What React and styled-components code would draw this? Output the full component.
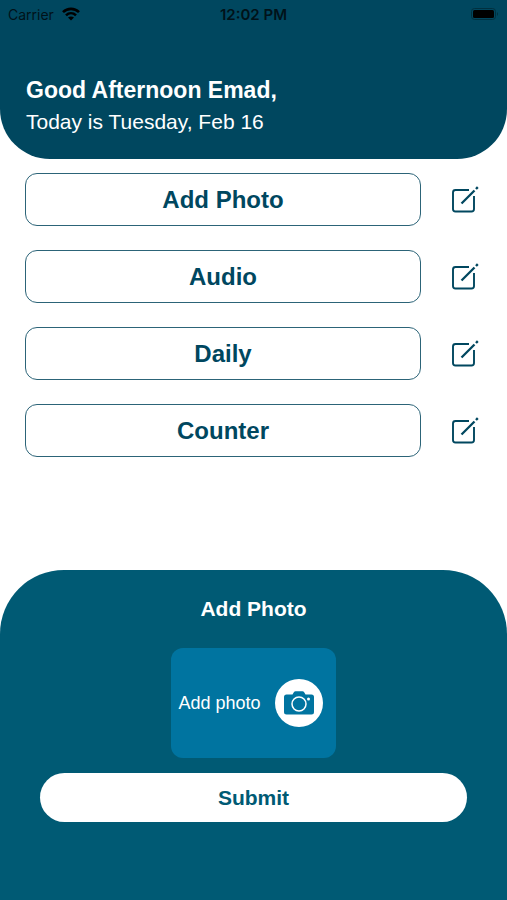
import React from 'react'
import styled, { createGlobalStyle } from 'styled-components'

const trackers = ['Add Photo', 'Audio', 'Daily', 'Counter']

const GlobalStyle = createGlobalStyle`
  * {
    box-sizing: border-box;
  }

  body {
    margin: 0;
    background: #fff;
    font-family: "Liberation Sans", Arial, sans-serif;
  }

  button {
    font-family: inherit;
    cursor: pointer;
  }
`

const Screen = styled.div`
  display: flex;
  flex-direction: column;
  min-height: 100vh;
`

const Header = styled.header`
  padding-bottom: 20px;
  border-radius: 0 0 50px 50px;
  background: #00475f;
  color: #fff;
`

const StatusBar = styled.div`
  display: grid;
  grid-template-columns: 1fr auto 1fr;
  align-items: center;
  height: 28px;
  padding: 0 8px;
  color: #001219;
  font-family: Inter, "Liberation Sans", sans-serif;
  font-size: 14px;
`

const Carrier = styled.span`
  display: flex;
  align-items: center;
  gap: 8px;
`

const Clock = styled.span`
  font-size: 15px;
  font-weight: 600;
`

const BatteryIcon = styled.svg`
  justify-self: end;
`

const Greeting = styled.div`
  padding: 47px 26px 0;
`

const Hello = styled.h1`
  margin: 0;
  font-size: 23px;
  line-height: 30px;
`

const Today = styled.p`
  margin: 0;
  font-size: 21px;
  line-height: 34px;
`

const TrackerList = styled.ul`
  display: flex;
  flex-direction: column;
  gap: 24px;
  margin: 0;
  padding: 14px 25px 24px;
  list-style: none;
`

const TrackerRow = styled.li`
  display: flex;
  align-items: center;
  gap: 25px;
`

const TrackerButton = styled.button`
  flex: 1;
  height: 53px;
  padding: 0;
  border: 1px solid #2c6478;
  border-radius: 12px;
  background: #fff;
  color: #00475f;
  font-size: 24px;
  font-weight: bold;
`

const EditButton = styled.button`
  display: flex;
  padding: 2px;
  border: 0;
  background: none;
  color: #00475f;
`

const Panel = styled.section`
  display: flex;
  flex-direction: column;
  align-items: center;
  margin-top: auto;
  padding: 24px 40px 78px;
  border-radius: 64px 64px 0 0;
  background: #005a74;
  color: #fff;
`

const PanelTitle = styled.h2`
  margin: 0 0 24px;
  font-size: 21px;
  line-height: 30px;
`

const PhotoButton = styled.button`
  display: flex;
  align-items: center;
  gap: 14px;
  height: 110px;
  padding: 0 13px 0 7px;
  border: 0;
  border-radius: 12px;
  background: #0074a0;
  color: #fff;
  font-size: 18px;
`

const CameraBadge = styled.span`
  display: flex;
  align-items: center;
  justify-content: center;
  width: 48px;
  height: 48px;
  border-radius: 50%;
  background: #fff;
`

const SubmitButton = styled.button`
  width: 100%;
  height: 49px;
  margin-top: 15px;
  border: 0;
  border-radius: 25px;
  background: #fff;
  color: #005a74;
  font-size: 21px;
  font-weight: bold;
`

const WifiIcon = () => (
  <svg width="18" height="14" viewBox="0 0 18 14" fill="none" stroke="#000" strokeWidth="2.6" aria-hidden="true">
    <path d="M1 5.2C5.5 .7 12.500 .7 17 5.200" />
    <path d="M4 8.400C6.900 5.600 11.100 5.600 14 8.400" />
    <path d="M6 10.600C7.700 9 10.300 9 12 10.600L9 13.600Z" fill="#000" stroke="none" />
  </svg>
)

const Battery = () => (
  <BatteryIcon width="28" height="12" viewBox="0 0 28 12" aria-hidden="true">
    <rect x=".5" y=".5" width="24" height="11" rx="3" fill="none" stroke="#00303f" />
    <rect x="2" y="2" width="21" height="8" rx="1.500" fill="#000" />
    <path d="M26 4Q28 6 26 8Z" fill="#00303f" />
  </BatteryIcon>
)

const EditIcon = () => (
  <svg width="32" height="32" viewBox="0 0 32 32" fill="none" stroke="currentColor" strokeWidth="1.900" aria-hidden="true">
    <path d="M21 6H7.500Q5 6 5 8.500V25Q5 27.500 7.500 27.500H23.500Q26 27.500 26 25V12" />
    <path d="M13.500 19.500L26.500 6.500" strokeWidth="2.300" />
    <path d="M28 5L29.800 3.200" strokeWidth="2.400" />
  </svg>
)

const CameraIcon = () => (
  <svg width="30" height="24" viewBox="0 0 30 24" aria-hidden="true">
    <path
      d="M2.500 3.500H8.500L10 1Q10.500 .3 11.500 .3H18.500Q19.500 .3 20 1L21.500 3.500H27.500Q30 3.500 30 6V21Q30 23.500 27.500 23.500H2.500Q0 23.500 0 21V6Q0 3.500 2.500 3.500Z"
      fill="#0074a0"
    />
    <circle cx="15" cy="13" r="7" fill="none" stroke="#fff" strokeWidth="1.500" />
    <circle cx="24.500" cy="8" r="1.500" fill="#fff" />
  </svg>
)

const App = () => {
  const [selected, setSelected] = React.useState(trackers[0])

  return (
    <>
      <GlobalStyle />
      <Screen>
        <Header>
          <StatusBar>
            <Carrier>Carrier <WifiIcon /></Carrier>
            <Clock>12:02 PM</Clock>
            <Battery />
          </StatusBar>
          <Greeting>
            <Hello>Good Afternoon Emad,</Hello>
            <Today>Today is Tuesday, Feb 16</Today>
          </Greeting>
        </Header>
        <TrackerList>
          {trackers.map(name => (
            <TrackerRow key={name}>
              <TrackerButton type="button" onClick={() => setSelected(name)}>{name}</TrackerButton>
              <EditButton type="button" aria-label={`Edit ${name}`}><EditIcon /></EditButton>
            </TrackerRow>
          ))}
        </TrackerList>
        <Panel>
          <PanelTitle>{selected}</PanelTitle>
          <PhotoButton type="button">
            Add photo
            <CameraBadge><CameraIcon /></CameraBadge>
          </PhotoButton>
          <SubmitButton type="button">Submit</SubmitButton>
        </Panel>
      </Screen>
    </>
  )
}

export default App
